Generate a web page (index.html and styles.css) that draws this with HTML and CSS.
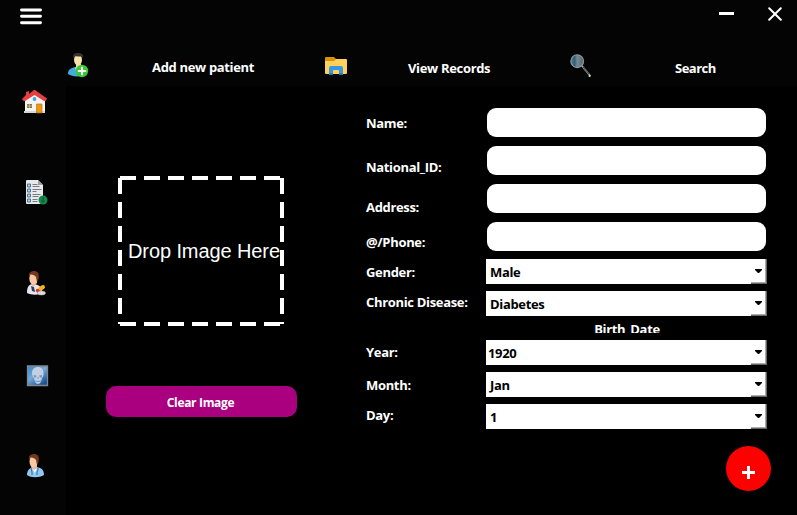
FILE: index.html
```html
<!DOCTYPE html>
<html lang="en">
<head>
<meta charset="utf-8">
<title>Patient records</title>
<link rel="stylesheet" href="styles.css">
</head>
<body>
<div class="window">
  <header class="titlebar">
    <svg class="menu" width="24" height="18" viewBox="0 0 24 18" stroke="#fff" stroke-width="2.9" stroke-linecap="round"><path d="M2.500 2h19M2.500 8.300h19M2.500 14.800h19"/></svg>
    <svg class="minimize" width="15" height="3" viewBox="0 0 15 3"><path fill="#fff" d="M0 0h15v3H0z"/></svg>
    <svg class="close" width="14" height="14" viewBox="0 0 14 14" stroke="#fff" stroke-width="2" stroke-linecap="round"><path d="M1.200 1.200l11.600 11.600M12.800 1.200L1.200 12.800"/></svg>
  </header>
  <nav class="tabs">
    <a class="tab tab-add">
      <svg width="21" height="25" viewBox="0 0 21 25">
        <path fill="#42acdf" d="M0 20c0-3 3-5 7-6h5c3 1 5 3 5 6v2c-5 2-13 2-17-1z"/>
        <path fill="#f6d898" d="M8 11h5v3l1 2-3 3-4-3 1-2z"/>
        <ellipse cx="10" cy="6.800" rx="4" ry="5.500" fill="#fbe2ab"/>
        <path fill="#333" d="M5.500 5C4 1 7 0 10 0s6 1 5 5l-1.500-1.500c-3 .5-5-1-6.500 0z"/>
        <circle cx="14" cy="18" r="6.200" fill="#35cb31"/>
        <path stroke="#fff" stroke-width="2" d="M9.800 18h8.400M14 13.800v8.400"/>
      </svg>
      <span>Add new patient</span>
    </a>
    <a class="tab tab-view">
      <svg width="22" height="19" viewBox="0 0 22 19">
        <path fill="#dc9300" d="M0 1q0-1 1-1h8l2 2v4H0z"/>
        <path fill="#ffd05b" d="M0 4h9l2-2h10q1 0 1 1v13q0 1-1 1H1q-1 0-1-1z"/>
        <path fill="#3898df" d="M4 18v-7q0-2 2-2h10q2 0 2 2v7h-4v-4q0-1-1-1H9q-1 0-1 1v4z"/>
        <path fill="#176db2" d="M4 16.500h4V18H5zM14 16.500h4l-1 1.500h-3z"/>
      </svg>
      <span>View Records</span>
    </a>
    <a class="tab tab-search">
      <svg width="22" height="24" viewBox="0 0 22 24">
        <path d="M12 12l8 9.500" stroke="#959ca0" stroke-width="1.900" stroke-linecap="round"/>
        <path d="M13 13l6 7" stroke="#20272b" stroke-width=".8"/>
        <defs><linearGradient id="lens"><stop stop-color="#617d8c"/><stop offset=".3" stop-color="#2c5f7c"/><stop offset=".5" stop-color="#728b98"/><stop offset="1" stop-color="#5e6264"/></linearGradient></defs>
        <circle cx="7.200" cy="7.200" r="6.400" fill="url(#lens)" stroke="#8d969b" stroke-width="1.100"/>
        <circle cx="19.500" cy="22" r="1" fill="#d9dddf"/>
      </svg>
      <span>Search</span>
    </a>
  </nav>
  <aside class="sidebar">
    <svg class="home" width="26" height="24" viewBox="0 0 26 24">
      <path fill="#f4f4f4" d="M3 9l10-6 10 7v12H3z"/>
      <path fill="#d5d5d5" d="M2 21h21v2H2z"/>
      <path fill="#e53f40" d="M4 2l3-1v3l5-4h1l12 8.500-1.500 2.500H22l-9.500-6L3 11H1.500L0 9l4-4z"/>
      <circle cx="12.500" cy="9" r="1.900" fill="#42a7df"/>
      <path fill="#8d7142" d="M5 14h5v4H5z"/><path stroke="#d4c398" stroke-width=".7" d="M5 16h5M7.500 14v4"/>
      <path fill="#ed970c" stroke="#a96f17" stroke-width=".6" d="M14.500 14h5.500v9h-5.500z"/>
    </svg>
    <svg class="list" width="24" height="26" viewBox="0 0 24 26">
      <path fill="#e8e9ec" d="M2 0h11l5 5v19H2q-1 0-1-1V1q0-1 1-1z"/>
      <path fill="#9da0a5" d="M13 0v5h5z"/>
      <g fill="#a7d1ed" stroke="#4b6a82" stroke-width=".9"><path d="M2.500 4h3v3h-3zM2.500 9h3v3h-3zM2.500 14h3v3h-3zM2.500 19h3v3h-3z"/></g>
      <path stroke="#777b80" stroke-width="1.200" d="M7.500 4.500h5M7.500 6.500h7M7.500 9.500h9M7.500 11.500h4M7.500 14.500h8M7.500 16.500h6M7.500 19.500h5M7.500 21.500h5"/>
      <circle cx="18" cy="20" r="4.500" fill="#16874d"/>
      <path stroke="#07562d" d="M18 17v5M16.500 20.500l1.500 2 1.500-2" fill="none"/>
    </svg>
    <svg class="pharmacist" width="20" height="25" viewBox="0 0 20 25">
      <path fill="#e5e5ed" d="M0 21c0-5 2-8 6-8s9 2 9 7l-2 3c-4 1-9 1-13-1z"/>
      <path fill="#343a66" d="M4 15l3 1 1 5-3-1z"/>
      <path fill="#efb18d" d="M4 9h6v3l-4 4-2-4z"/><ellipse cx="6.300" cy="7.500" rx="4" ry="6" fill="#f8c8a6"/>
      <path fill="#70381d" d="M2 6C1 2 4 0 7 0s6 2 4.500 8L10 11 9 6C8 4 4 3 3 4z"/>
      <path stroke="#f8b11c" stroke-width="4" stroke-linecap="round" d="M13 18l3-2"/><path stroke="#dd3037" stroke-width="3.500" stroke-linecap="round" d="M10.500 19.500l1.500 1.500"/>
      <ellipse cx="14.500" cy="22" rx="4" ry="2.100" fill="#ddd" stroke="#aaa" stroke-width=".5"/>
    </svg>
    <svg class="xray" width="24" height="22" viewBox="0 0 24 22">
      <defs><linearGradient id="blue" x2=".7" y2="1"><stop stop-color="#3486cc"/><stop offset=".5" stop-color="#74a9d9"/><stop offset="1" stop-color="#174f93"/></linearGradient></defs>
      <path d="M1.500 1h20v19.500h-20z" fill="url(#blue)" stroke="#7f8990" stroke-width="1.300"/>
      <path fill="#c3d0e2" d="M6 8c0-4 3-6 6-6s5.500 2 5.500 6c0 3-.5 4-1.500 5l-1 4q-3 4-6 0l-1-4c-1-1-2-2-2-5z"/>
      <path fill="#719ac9" d="M7.500 10l3 .5-.5 2H8zM13 10.500l3-.5v2.500h-2zM12 11.500l1 2h-2z"/>
      <path stroke="#5b81ae" stroke-width=".8" d="M9 16q3 1 6 0" fill="none"/>
    </svg>
    <svg class="doctor" width="18" height="24" viewBox="0 0 18 24">
      <path fill="#92c9f1" d="M0 21c0-5 3-8 8-8s9 2 9 8c-5 3-13 3-17 0z"/>
      <path fill="#efb18d" d="M4 9h6v4l-3 3-3-3z"/><ellipse cx="6.500" cy="7.500" rx="4" ry="6" fill="#f8c8a6"/>
      <path fill="#70381d" d="M2 6C1 2 4 0 7 0s6 2 4.500 8L10 11 9 6C8 4 4 3 3 4z"/>
      <path stroke="#35649a" stroke-width="1" fill="none" d="M4 14l1 4v3M11 14q0 3-1 4v3"/>
      <path fill="#fff" d="M5 14l2 2 3-2-2 5z"/>
    </svg>
  </aside>
  <main class="content">
    <section class="photo">
      <div class="dropzone">
        <svg class="dashes" width="166" height="150" viewBox="0 0 166 150" fill="none" stroke="#fff" stroke-width="4"><path stroke-dasharray="16 8" d="M2 2h162M2 148h162M2 2v146M164 2v146"/></svg>
        <span class="drop-text">Drop Image Here</span>
      </div>
      <button class="clear">Clear Image</button>
    </section>
    <section class="labels">
      <label class="name">Name:</label>
      <label class="nid">National_ID:</label>
      <label class="address">Address:</label>
      <label class="phone">@/Phone:</label>
      <label class="gender">Gender:</label>
      <label class="disease">Chronic Disease:</label>
      <label class="year">Year:</label>
      <label class="month">Month:</label>
      <label class="day">Day:</label>
    </section>
    <section class="fields">
      <input type="text" aria-label="Name">
      <input type="text" aria-label="National ID">
      <input type="text" aria-label="Address">
      <input type="text" aria-label="Phone">
      <div class="combo"><span class="value">Male</span><i class="drop"></i></div>
      <div class="combo"><span class="value">Diabetes</span><i class="drop"></i></div>
      <div class="birth">Birth_Date</div>
      <div class="combo combo-year"><span class="value">1920</span><i class="drop"></i></div>
      <div class="combo"><span class="value">Jan</span><i class="drop"></i></div>
      <div class="combo"><span class="value">1</span><i class="drop"></i></div>
      <button class="add" aria-label="Add"><svg width="13" height="13" viewBox="0 0 13 13"><path fill="#fff" d="M5 0h3v5h5v3H8v5H5V8H0V5h5z"/></svg></button>
    </section>
  </main>
</div>
</body>
</html>
```
FILE: styles.css
```css
* { box-sizing: border-box; }
body { margin: 0; background: #040404; color: #fff; font: 700 13px/20px "Open Sans", "Noto Sans", sans-serif; letter-spacing: -.33px; overflow: hidden; }
svg { display: block; flex: none; }
button, input { border: 0; padding: 0; margin: 0; font: inherit; letter-spacing: inherit; }
.window { width: 797px; height: 515px; display: grid; grid-template: 46px 40px 429px / 66px 731px; background: #040404; }
.titlebar { grid-column: 1 / 3; display: flex; align-items: flex-start; padding: 8px 15px 0 19px; }
.minimize { margin: 4px 34px 0 auto; }
.close { margin-top: -1px; }
.tabs { grid-column: 1 / 3; display: grid; grid-template-columns: 257px 245px 200px; padding-left: 68px; }
.tab { display: flex; align-items: flex-start; }
.tab span { margin-top: 12px; white-space: nowrap; }
.tab-add svg { margin: 7px 63px 0 0; }
.tab-add span { margin-top: 11px; }
.tab-view svg { margin: 11px 61px 0 0; }
.tab-search svg { margin: 8px 83px 0 0; }
.tab-search span { letter-spacing: -.5px; }
.sidebar { display: flex; flex-direction: column; padding-top: 4px; }
.home { margin-left: 22px; }
.list { margin: 66px 0 0 24.5px; }
.pharmacist { margin: 65px 0 0 27px; }
.xray { margin: 69px 0 0 26px; }
.doctor { margin: 67px 0 0 27px; }
.content { background: #000; display: grid; grid-template-columns: 300px 120px 282px; }
.photo { padding: 90px 0 0 40px; }
.dropzone { width: 166px; height: 150px; margin-left: 12px; display: grid; }
.dropzone > * { grid-area: 1 / 1; }
.drop-text { align-self: center; padding-left: 10px; white-space: nowrap; font: 20px/24px "Liberation Sans", Arial, sans-serif; letter-spacing: -.1px; }
.clear { display: block; width: 191px; height: 31px; margin-top: 60px; border-radius: 10px; background: #aa007f; color: #fff; font-size: 12px; line-height: 29px; padding: 2px 2px 0 0; }
.labels { display: flex; flex-direction: column; padding-top: 27px; white-space: nowrap; }
.nid { margin-top: 24px; }
.address { margin-top: 20px; }
.phone { margin-top: 15px; }
.gender, .disease, .day { margin-top: 10px; }
.year { margin-top: 30px; }
.month { margin-top: 13px; }
.fields { display: flex; flex-direction: column; padding-top: 22px; }
.fields input { width: 279px; height: 29px; margin: 0 0 9px 1px; border-radius: 9px; background: #fff; }
.fields input:nth-of-type(4) { margin-bottom: 8px; }
.combo { width: 281px; height: 25px; margin-bottom: 7px; background: #fff; color: #000; display: flex; justify-content: space-between; }
.value { padding: 3px 0 0 4px; }
.combo-year .value { padding-left: 2px; }
.drop { width: 16px; height: 25px; border: solid #666; border-width: 0 1px 1px 0; box-shadow: inset -1px -1px #aaa; display: flex; }
.drop::before { content: ""; margin: 10px 0 0 4px; width: 7px; height: 4px; background: #000; clip-path: polygon(0 0, 100% 0, 100% 25%, 57% 100%, 43% 100%, 0 25%); }
.birth { height: 10px; margin: 0 0 7px; overflow: hidden; text-align: center; line-height: 12px; }
.add { width: 45px; height: 45px; margin: 10px 0 0 240px; border-radius: 50%; background: #f00; display: grid; place-items: center; padding: 8px 0 0 0; }
```
